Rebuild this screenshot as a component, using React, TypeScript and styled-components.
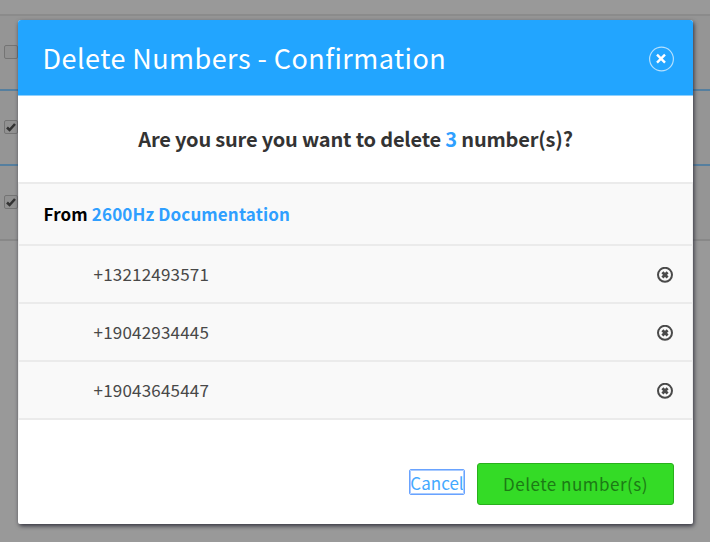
import React from "react";
import styled, { createGlobalStyle, css } from "styled-components";

const GlobalStyle = createGlobalStyle`
  * { box-sizing: border-box; }
  html, body { margin: 0; height: 100%; overflow: hidden; }
  body { background: #999; }
  #root { height: 100%; }
  body, button { font-family: "Noto Sans CJK SC", "Noto Sans", sans-serif; }
`;

const Page = styled.div`
  position: relative;
  width: 710px;
  height: 542px;
  padding-top: 14px;
  overflow: hidden;
  background: #999;
`;

const BackRow = styled.div<{ $height: number; $line: string }>`
  display: flex;
  align-items: center;
  height: ${(p) => p.$height}px;
  padding: 0 0 2px 4px;
  background: #959595;
  border-top: 2px solid ${(p) => p.$line};
`;

const BackEnd = styled.div`
  height: 2px;
  background: #888;
`;

const Check = styled.span`
  display: flex;
  align-items: center;
  justify-content: center;
  width: 14px;
  height: 14px;
  border: 1px solid #747474;
  border-radius: 2px;
  background: #919191;
`;

const Dialog = styled.section`
  position: absolute;
  left: 18px;
  top: 20px;
  width: 675px;
  height: 504px;
  display: flex;
  flex-direction: column;
  overflow: hidden;
  border-radius: 3px 3px 2px 2px;
  background: #fff;
`;

const Shadow = styled.div`
  position: absolute;
  left: 18px;
  top: 20px;
  width: 675px;
  height: 504px;
  border-radius: 3px;
  box-shadow: 1px 2px 4px 0 #34343f;
`;

const Header = styled.header`
  display: flex;
  align-items: center;
  justify-content: space-between;
  height: 76px;
  flex: none;
  padding: 0 19px 0 24.5px;
  background: #22a5ff;
  border-bottom: 1px solid #8fd0fc;
`;

const Title = styled.h1`
  margin: 0;
  font-size: 27px;
  font-weight: 400;
  line-height: 40px;
  letter-spacing: 0.45px;
  color: #fff;
  white-space: nowrap;
`;

const iconButton = css`
  display: flex;
  padding: 0;
  border: 0;
  background: none;
`;

const Close = styled.button`
  ${iconButton}
  margin-top: 2px;
`;

const Remove = styled.button`
  ${iconButton}
  margin-top: 1px;
`;

const Accent = styled.span`
  color: #2f9fff;
`;

const Question = styled.h2`
  height: 86px;
  flex: none;
  margin: 0;
  line-height: 86px;
  font-size: 20px;
  font-weight: 700;
  letter-spacing: -0.19px;
  text-align: center;
  color: #333;
  white-space: nowrap;
`;

const List = styled.div`
  flex: none;
  border: 1px solid #ebebeb;
  border-width: 2px 1px;
  background: #f9f9f9;
`;

const Account = styled.div`
  height: 60px;
  padding-left: 24.5px;
  line-height: 59px;
  font-size: 17px;
  font-weight: 700;
  letter-spacing: 0.13px;
  color: #000;
`;

const NumberRow = styled.div`
  display: flex;
  align-items: center;
  justify-content: space-between;
  height: 58px;
  padding: 0 19px 0 74.5px;
  border-top: 2px solid #ebebeb;
  font-size: 17px;
  line-height: 26px;
  letter-spacing: 0.2px;
  color: #484848;
`;

const Footer = styled.footer`
  display: flex;
  flex: 1;
  align-items: center;
  justify-content: flex-end;
  gap: 12px;
  padding: 23px 19px 0 0;
`;

const Cancel = styled.button`
  width: 56px;
  height: 26px;
  margin-top: -3px;
  padding: 1px 0 0;
  border: 1px solid #69a3ff;
  outline: 1px solid #a9cbff;
  outline-offset: -2px;
  border-radius: 2px;
  background: #fff;
  font-size: 17px;
  line-height: 23px;
  color: #43a9ff;
`;

const Delete = styled.button`
  width: 197px;
  height: 42px;
  padding: 0;
  border: 1px solid #29b01c;
  border-radius: 3px;
  background: #34db26;
  font-size: 17px;
  line-height: 40px;
  letter-spacing: 0.5px;
  color: #1c7a15;
`;

const CheckMark = () => (
  <svg width="12" height="12" viewBox="0 0 12 12">
    <path d="M2 6.5 4.6 9 10 3" fill="none" stroke="#333" strokeWidth="2.6" />
  </svg>
);

const CloseIcon = () => (
  <svg width="26" height="26" viewBox="0 0 26 26" fill="none">
    <circle cx="13.5" cy="13" r="11.9" stroke="#b3dffd" strokeWidth="1.2" />
    <path d="M9 8.6l8 8M17 8.6l-8 8" stroke="#fff" strokeWidth="2.4" />
  </svg>
);

const RemoveIcon = () => (
  <svg width="16" height="16" viewBox="0 0 16 16" fill="none" stroke="#4a4a4a">
    <circle cx="8" cy="7.8" r="7" strokeWidth="2" />
    <path d="M5.4 5.2l5.2 5.2M10.6 5.2l-5.2 5.2" strokeWidth="2.8" />
  </svg>
);

const backRows = [
  { height: 75, line: "#8b8b8b", checked: false },
  { height: 75, line: "#557f9f", checked: true },
  { height: 75, line: "#557f9f", checked: true },
];

const numbers = ["+13212493571", "+19042934445", "+19043645447"];

export default function App() {
  return (
    <>
      <GlobalStyle />
      <Page>
        {backRows.map((row, i) => (
          <BackRow key={i} $height={row.height} $line={row.line}>
            <Check>{row.checked && <CheckMark />}</Check>
          </BackRow>
        ))}
        <BackEnd />
        <Shadow />
        <Dialog>
          <Header>
            <Title>Delete Numbers - Confirmation</Title>
            <Close aria-label="Close">
              <CloseIcon />
            </Close>
          </Header>
          <Question>
            Are you sure you want to delete <Accent>3</Accent> number(s)?
          </Question>
          <List>
            <Account>
              From <Accent>2600Hz Documentation</Accent>
            </Account>
            {numbers.map((n) => (
              <NumberRow key={n}>
                <span>{n}</span>
                <Remove aria-label={`Remove ${n}`}>
                  <RemoveIcon />
                </Remove>
              </NumberRow>
            ))}
          </List>
          <Footer>
            <Cancel>Cancel</Cancel>
            <Delete>Delete number(s)</Delete>
          </Footer>
        </Dialog>
      </Page>
    </>
  );
}
